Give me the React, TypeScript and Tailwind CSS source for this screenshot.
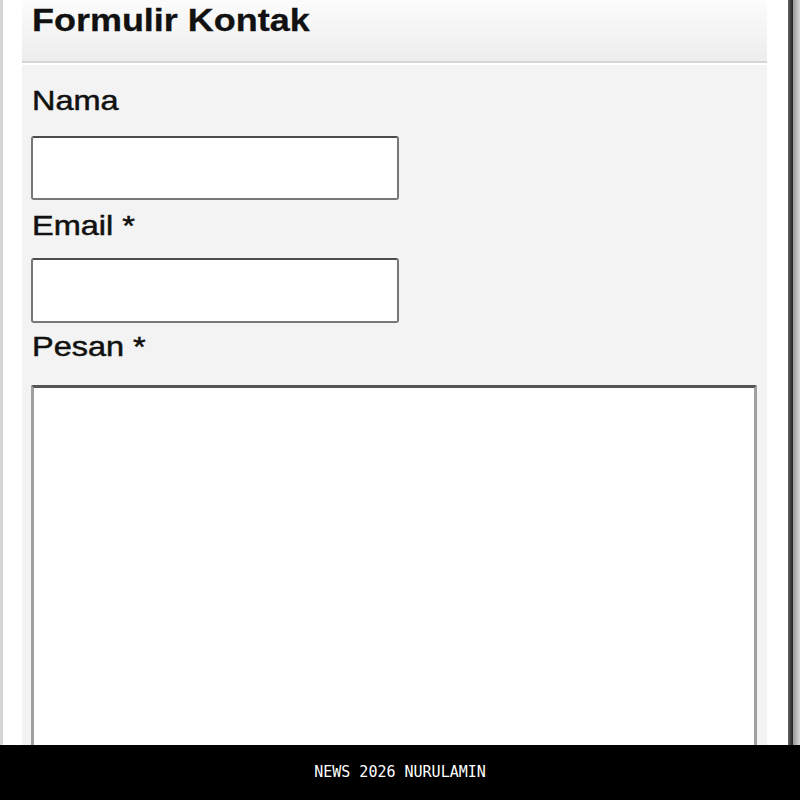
import React from "react";

const sans = { fontFamily: '"Liberation Sans", Arial, sans-serif' };

function Label({ text, className }: { text: string; className: string }) {
  return (
    <div className={"h-[28px] text-[28px] leading-none text-[#111] [-webkit-text-stroke:0.5px_#111] " + className} style={sans}>
      <span className="inline-block origin-left scale-x-[1.16]">{text}</span>
    </div>
  );
}

export default function App() {
  return (
    <div className="relative w-[800px] h-[800px] overflow-hidden bg-white flex">
      <div className="w-[3px] bg-[#d6d6d6]" />
      <div className="w-[19px] bg-white" />
      <div className="w-[745px] bg-[#f3f3f3] flex flex-col">
        <div className="h-[61px] bg-gradient-to-b from-[#fcfcfc] to-[#ededed] pl-[10px] pt-[5px]">
          <div className="text-[31px] leading-none font-bold text-[#111] [-webkit-text-stroke:0.3px_#111]" style={sans}>
            <span className="inline-block origin-left scale-x-[1.16]">Formulir Kontak</span>
          </div>
        </div>
        <div className="h-[2px] bg-[#d6d6d6]" />
        <div className="h-[2px] bg-white" />
        <div className="pl-[10px] flex flex-col">
          <Label text="Nama" className="mt-[22px]" />
          <div className="mt-[21px] -ml-[1px] w-[368px] h-[64px] bg-white border-2 border-[#777] border-t-[#4d4d4d] rounded-[3px]" />
          <Label text="Email *" className="mt-[12px]" />
          <div className="mt-[18px] -ml-[1px] w-[368px] h-[65px] bg-white border-2 border-[#777] border-t-[#4d4d4d] rounded-[3px]" />
          <Label text="Pesan *" className="mt-[10px]" />
          <div className="mt-[24px] -ml-[1px] w-[726px] h-[400px] bg-white border-[3px] border-[#a0a0a0] border-t-[#555] rounded-t-[2px]" />
        </div>
      </div>
      <div className="w-[21px] bg-white" />
      <div className="w-[5px] bg-gradient-to-r from-[#666] to-[#222]" />
      <div className="flex-1 bg-gradient-to-r from-[#9a9a9a] to-[#d8d8d8]" />
      <div className="absolute left-0 bottom-0 w-[800px] h-[55px] bg-black flex items-center justify-center">
        <span
          className="text-white text-[15px] leading-none"
          style={{ fontFamily: '"DejaVu Sans Mono", "Liberation Mono", monospace' }}
        >
          NEWS 2026 NURULAMIN
        </span>
      </div>
    </div>
  );
}
